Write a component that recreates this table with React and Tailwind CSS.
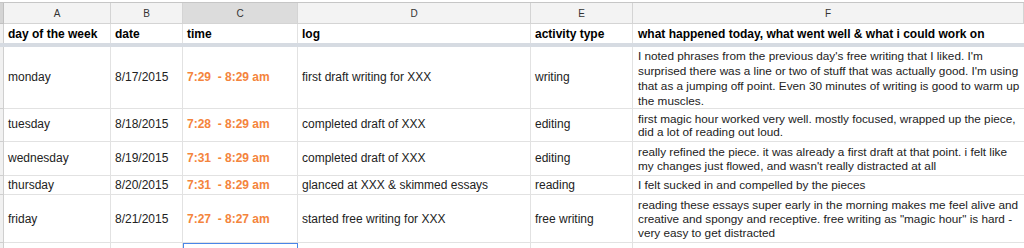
const cols = ['A', 'B', 'C', 'D', 'E', 'F']

const rows = [
  {
    h: 'h-[62px] leading-[15px]',
    day: 'monday',
    date: '8/17/2015',
    time: '7:29  - 8:29 am',
    log: 'first draft writing for XXX',
    type: 'writing',
    notes:
      "I noted phrases from the previous day's free writing that I liked. I'm surprised there was a line or two of stuff that was actually good. I'm using that as a jumping off point. Even 30 minutes of writing is good to warm up the muscles.",
  },
  {
    h: 'h-[33px] leading-[13.5px]',
    day: 'tuesday',
    date: '8/18/2015',
    time: '7:28  - 8:29 am',
    log: 'completed draft of XXX',
    type: 'editing',
    notes:
      'first magic hour worked very well. mostly focused, wrapped up the piece, did a lot of reading out loud.',
  },
  {
    h: 'h-[34px] leading-[13.5px]',
    day: 'wednesday',
    date: '8/19/2015',
    time: '7:31  - 8:29 am',
    log: 'completed draft of XXX',
    type: 'editing',
    notes:
      "really refined the piece. it was already a first draft at that point. i felt like my changes just flowed, and wasn't really distracted at all",
  },
  {
    h: 'h-[19px] leading-[14px]',
    day: 'thursday',
    date: '8/20/2015',
    time: '7:31  - 8:29 am',
    log: 'glanced at XXX & skimmed essays',
    type: 'reading',
    notes: 'I felt sucked in and compelled by the pieces',
  },
  {
    h: 'h-[48px] leading-[14px]',
    day: 'friday',
    date: '8/21/2015',
    time: '7:27  - 8:27 am',
    log: 'started free writing for XXX',
    type: 'free writing',
    notes:
      'reading these essays super early in the morning makes me feel alive and creative and spongy and receptive. free writing as "magic hour" is hard - very easy to get distracted',
  },
]

const grid = 'grid grid-cols-[4px_107px_72px_115px_233px_102px_391px]'
const cell = 'flex items-center border-r border-b border-[#e2e2e2] pl-[4px] overflow-hidden whitespace-nowrap'

function Row({ r }) {
  return (
    <div className={`${grid} ${r.h}`}>
      <div className="bg-[#f1f1f1] border-r border-b border-[#cfcfcf]" />
      <div className={cell}>{r.day}</div>
      <div className={cell}>{r.date}</div>
      <div className={`${cell} font-bold text-[#f4843c] whitespace-pre`}>{r.time}</div>
      <div className={cell}>{r.log}</div>
      <div className={cell}>{r.type}</div>
      <div className="flex items-center border-b border-[#e2e2e2] pl-[5px] pr-[1px] text-[11.75px]">{r.notes}</div>
    </div>
  )
}

export default function App() {
  return (
    <div
      className="w-[1024px] h-[248px] overflow-hidden bg-white text-[12px] text-[#222]"
      style={{ fontFamily: '"Liberation Sans", Arial, sans-serif' }}
    >
      <div className="h-[2px] bg-white" />
      {/* column letters */}
      <div className={`${grid} h-[22px] border-t border-[#c6c6c6] text-[10px] text-[#333]`}>
        <div className="bg-[#d4d4d4] border-r border-b border-[#c0c0c0]" />
        {cols.map((c) => (
          <div
            key={c}
            className={`flex items-center justify-center border-r border-b border-[#d4d4d4] ${
              c === 'C' ? 'bg-[#dcdcdc]' : 'bg-[#f3f3f3]'
            }`}
          >
            {c}
          </div>
        ))}
      </div>
      {/* header row */}
      <div className={`${grid} h-[19px] font-bold text-black`}>
        <div className="bg-[#f1f1f1] border-r border-[#cfcfcf]" />
        <div className="flex items-center border-r border-[#e2e2e2] pl-[4px] whitespace-nowrap">day of the week</div>
        <div className="flex items-center border-r border-[#e2e2e2] pl-[4px]">date</div>
        <div className="flex items-center border-r border-[#e2e2e2] pl-[4px]">time</div>
        <div className="flex items-center border-r border-[#e2e2e2] pl-[4px]">log</div>
        <div className="flex items-center border-r border-[#e2e2e2] pl-[4px] whitespace-nowrap">activity type</div>
        <div className="flex items-center pl-[5px] whitespace-nowrap">
          what happened today, what went well &amp; what i could work on
        </div>
      </div>
      {/* frozen divider */}
      <div className="h-[4px] bg-[#d6dbe2]" />
      {rows.map((r) => (
        <Row key={r.day} r={r} />
      ))}
      {/* next empty row with selection */}
      <div className={`${grid} h-[6px]`}>
        <div className="bg-[#f1f1f1] border-r border-[#cfcfcf]" />
        <div className="border-r border-[#e2e2e2]" />
        <div className="border-r border-[#e2e2e2]" />
        <div className="border-t border-l border-r border-[#4a86e8]" />
        <div className="border-r border-[#e2e2e2]" />
        <div className="border-r border-[#e2e2e2]" />
        <div />
      </div>
    </div>
  )
}
